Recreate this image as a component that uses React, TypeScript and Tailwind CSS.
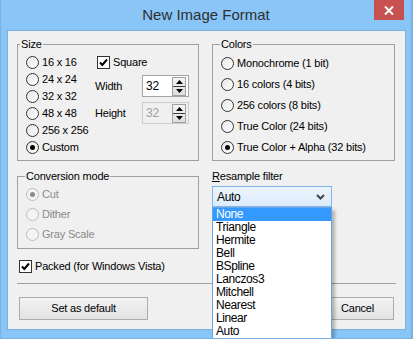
import React from 'react';

const Radio: React.FC<{ checked?: boolean; disabled?: boolean }> = ({ checked, disabled }) => (
    <span
        className={`w-[13px] h-[13px] rounded-full border flex items-center justify-center shrink-0 ${
            disabled ? 'border-[#bcbcbc] bg-[#f4f4f4]' : 'border-[#333] bg-gradient-to-br from-[#e6e6e6] to-white'
        }`}
    >
        {checked && <span className={`w-[5px] h-[5px] rounded-full ${disabled ? 'bg-[#8a8a8a]' : 'bg-black'}`} />}
    </span>
);

const Check: React.FC = () => (
    <span className="w-[13px] h-[13px] border border-[#333] bg-white flex items-center justify-center shrink-0">
        <svg width="11" height="11" viewBox="0 0 11 11">
            <path d="M2 5.5 L4.3 8 L9 2.5" fill="none" stroke="#000" strokeWidth="2" />
        </svg>
    </span>
);

const SpinBtn: React.FC = () => (
    <span className="w-[14px] h-[19px] flex flex-col border border-[#a0a0a0] bg-gradient-to-b from-[#f4f4f4] to-[#dedede]">
        <span className="flex-1 flex items-center justify-center border-b border-[#404040]">
            <svg width="7" height="4" viewBox="0 0 7 4"><path d="M0 4 L3.5 0 L7 4 Z" fill="#000" /></svg>
        </span>
        <span className="flex-1 flex items-center justify-center">
            <svg width="7" height="4" viewBox="0 0 7 4"><path d="M0 0 L3.5 4 L7 0 Z" fill="#000" /></svg>
        </span>
    </span>
);

const Spin: React.FC<{ value: string; disabled?: boolean }> = ({ value, disabled }) => (
    <div
        className={`w-[47px] h-[22px] border flex items-center justify-between pl-[3px] pr-[2px] ${
            disabled ? 'border-[#cccccc] bg-[#f0f0f0] text-[#a0a0a0]' : 'border-[#a5a5a5] bg-white text-black'
        }`}
    >
        <span className="text-[12px] leading-[14px]">{value}</span>
        <SpinBtn />
    </div>
);

const Group: React.FC<{ label: string; labelLeft: string; className: string; children: React.ReactNode }> = ({
    label,
    labelLeft,
    className,
    children,
}) => (
    <div className={`relative border border-[#a0a0a0] ${className}`}>
        <span className={`absolute -top-[7px] ${labelLeft} px-[1px] bg-[#f0f0f0] leading-[13px] text-black`}>{label}</span>
        {children}
    </div>
);

const filters = ['None', 'Triangle', 'Hermite', 'Bell', 'BSpline', 'Lanczos3', 'Mitchell', 'Nearest', 'Linear', 'Auto'];
const sizes = ['16 x 16', '24 x 24', '32 x 32', '48 x 48', '256 x 256', 'Custom'];
const colors = ['Monochrome (1 bit)', '16 colors (4 bits)', '256 colors (8 bits)', 'True Color (24 bits)', 'True Color + Alpha (32 bits)'];

const App: React.FC = () => {
    return (
        <div className="w-[413px] h-[339px] overflow-hidden relative bg-[#8ac5f7] border-l border-r-2 border-b border-[#78b2e6] font-['Liberation_Sans',Arial,sans-serif] text-[11px] tracking-[-0.2px] text-black">
            {/* title bar */}
            <div className="h-[30px] flex items-center justify-center">
                <span className="text-[15px] leading-[15px] tracking-normal text-[#2f2f2f] pb-[1px]">New Image Format</span>
            </div>
            <div className="absolute top-0 right-[7px] w-[30px] h-[20px] bg-[#c75050] flex items-center justify-center">
                <svg width="10" height="9" viewBox="0 0 10 9">
                    <path d="M1 0.5 L9 8.5 M9 0.5 L1 8.5" stroke="#fff" strokeWidth="2" />
                </svg>
            </div>

            {/* client */}
            <div className="ml-[6px] w-[399px] h-[300px] border border-[#7fb0dc] bg-[#f0f0f0] flex flex-col pl-[9px] pt-[13px]">
                <div className="flex gap-[13px]">
                    <Group label="Size" labelLeft="left-[2px]" className="w-[182px] h-[117px] flex pt-[9px] pl-[8px]">
                        <div className="w-[69px] flex flex-col">
                            {sizes.map((s, i) => (
                                <div key={s} className="h-[17px] flex items-center gap-[3px]">
                                    <Radio checked={i === 5} />
                                    <span>{s}</span>
                                </div>
                            ))}
                        </div>
                        <div className="flex flex-col">
                            <div className="h-[17px] flex items-center gap-[3px] pl-[2px]">
                                <Check />
                                <span>Square</span>
                            </div>
                            <div className="mt-[4px] flex items-center">
                                <span className="w-[47px]">Width</span>
                                <Spin value="32" />
                            </div>
                            <div className="mt-[5px] flex items-center">
                                <span className="w-[47px]">Height</span>
                                <Spin value="32" disabled />
                            </div>
                        </div>
                    </Group>
                    <Group label="Colors" labelLeft="left-[7px]" className="w-[183px] h-[117px] pt-[8px] pl-[8px]">
                        {colors.map((c, i) => (
                            <div key={c} className="h-[21px] flex items-center gap-[3px]">
                                <Radio checked={i === 4} />
                                <span>{c}</span>
                            </div>
                        ))}
                    </Group>
                </div>

                <div className="mt-[9px] flex gap-[13px]">
                    <Group label="Conversion mode" labelLeft="left-[7px]" className="mt-[6px] w-[182px] h-[73px] pt-[7px] pl-[8px] text-[#8a8a8a]">
                        {['Cut', 'Dither', 'Gray Scale'].map((m, i) => (
                            <div key={m} className="h-[20px] flex items-center gap-[3px]">
                                <Radio checked={i === 0} disabled />
                                <span>{m}</span>
                            </div>
                        ))}
                    </Group>
                    <div className="flex flex-col">
                        <span className="leading-[13px]">
                            <span className="underline">R</span>esample filter
                        </span>
                        <div className="relative mt-[3px] w-[120px] h-[21px] border border-[#7eb4ea] bg-gradient-to-b from-[#ecf4fc] to-[#dcecfc] flex items-center justify-between pl-[4px] pr-[6px]">
                            <span className="text-[12px] tracking-[-0.3px]">Auto</span>
                            <svg width="9" height="6" viewBox="0 0 9 6">
                                <path d="M1 1 L4.5 4.5 L8 1" fill="none" stroke="#444" strokeWidth="2" />
                            </svg>
                            <div className="absolute left-[-1px] top-[20px] w-[120px] h-[132px] border border-[#6aa5e2] bg-white shadow-[3px_3px_3px_rgba(0,0,0,0.25)] z-10 flex flex-col">
                                {filters.map((f, i) => (
                                    <div
                                        key={f}
                                        className={`h-[13px] leading-[13px] pl-[3px] text-[12px] tracking-[-0.4px] ${
                                            i === 0 ? 'bg-[#3399ff] text-white' : 'text-black'
                                        }`}
                                    >
                                        {f}
                                    </div>
                                ))}
                            </div>
                        </div>
                    </div>
                </div>

                <div className="mt-[10px] h-[14px] flex items-center gap-[3px] pl-[2px]">
                    <Check />
                    <span>Packed (for Windows Vista)</span>
                </div>

                <div className="mt-[10px] w-[379px] h-[1px] bg-[#a0a0a0]" />

                <div className="mt-[13px] ml-[2px] w-[375px] flex gap-[6px]">
                    <button className="w-[129px] h-[23px] border border-[#acacac] bg-gradient-to-b from-[#f2f2f2] to-[#e3e3e3]">
                        Set as default
                    </button>
                    <button className="ml-auto w-[73px] h-[23px] border border-[#acacac] bg-gradient-to-b from-[#f2f2f2] to-[#e3e3e3]">
                        OK
                    </button>
                    <button className="w-[73px] h-[23px] border border-[#acacac] bg-gradient-to-b from-[#f2f2f2] to-[#e3e3e3]">
                        Cancel
                    </button>
                </div>
            </div>
        </div>
    );
};

export default App;
